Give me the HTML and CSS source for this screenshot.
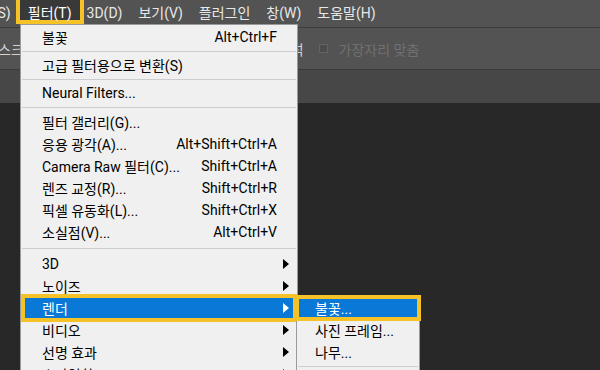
FILE: index.html
```html
<!DOCTYPE html>
<html lang="ko">
<head>
<meta charset="utf-8">
<title>필터 메뉴</title>
<link rel="stylesheet" href="styles.css">
</head>
<body>
<div class="app">
  <header class="menubar">
    <span class="mi first">선택(S)</span>
    <span class="mi active">필터(T)</span>
    <span class="mi after">3D(D)</span>
    <span class="mi">보기(V)</span>
    <span class="mi">플러그인</span>
    <span class="mi">창(W)</span>
    <span class="mi">도움말(H)</span>
  </header>
  <div class="options">
    <span class="opt-text field">스크</span>
    <span class="opt-text magnet">자석</span>
    <span class="checkbox"></span>
    <span class="opt-label">가장자리 맞춤</span>
  </div>
  <div class="tabbar"></div>
  <div class="workspace"></div>

  <div class="menu main-menu">
    <div class="item"><span class="label">불꽃</span><span class="key">Alt+Ctrl+F</span></div>
    <div class="sep"></div>
    <div class="item"><span class="label">고급 필터용으로 변환(S)</span></div>
    <div class="sep"></div>
    <div class="item"><span class="label">Neural Filters...</span></div>
    <div class="sep group"></div>
    <div class="item"><span class="label">필터 갤러리(G)...</span></div>
    <div class="item"><span class="label">응용 광각(A)...</span><span class="key">Alt+Shift+Ctrl+A</span></div>
    <div class="item"><span class="label">Camera Raw 필터(C)...</span><span class="key">Shift+Ctrl+A</span></div>
    <div class="item"><span class="label">렌즈 교정(R)...</span><span class="key">Shift+Ctrl+R</span></div>
    <div class="item"><span class="label">픽셀 유동화(L)...</span><span class="key">Shift+Ctrl+X</span></div>
    <div class="item"><span class="label">소실점(V)...</span><span class="key">Alt+Ctrl+V</span></div>
    <div class="sep wide"></div>
    <div class="item"><span class="label">3D</span><span class="arrow"></span></div>
    <div class="item"><span class="label">노이즈</span><span class="arrow"></span></div>
    <div class="item hl hl-main"><span class="label">렌더</span><span class="arrow"></span></div>
    <div class="item"><span class="label">비디오</span><span class="arrow"></span></div>
    <div class="item"><span class="label">선명 효과</span><span class="arrow"></span></div>
    <div class="item"><span class="label">스타일화</span><span class="arrow"></span></div>
  </div>

  <div class="menu submenu">
    <div class="item hl hl-sub"><span class="label">불꽃...</span></div>
    <div class="item"><span class="label">사진 프레임...</span></div>
    <div class="item"><span class="label">나무...</span></div>
    <div class="sep"></div>
    <div class="item"><span class="label">구름 효과 1</span></div>
  </div>
</div>
</body>
</html>
```

FILE: styles.css
```css
* {
  box-sizing: border-box;
  margin: 0;
  padding: 0;
}

html,
body {
  width: 600px;
  height: 370px;
  overflow: hidden;
}

body {
  background: #282828;
  font-family: Roboto, "Noto Sans CJK KR", sans-serif;
  font-size: 14px;
}

.app {
  position: relative;
  width: 600px;
  height: 370px;
  display: flex;
  flex-direction: column;
  overflow: hidden;
}

/* top menu bar */
.menubar {
  flex: none;
  height: 28px;
  background: #535353;
  border-bottom: 1px solid #3c3c3c;
  display: flex;
  align-items: flex-start;
  color: #e8e8e8;
  white-space: nowrap;
}

.mi {
  line-height: 27px;
  padding: 0 8px;
}

.mi.first {
  margin-left: -33px;
  padding: 0 5px 0 0;
}

.mi.active {
  height: 24px;
  padding: 0 8px;
  border: 4px solid #f5c228;
  border-top: 0;
  background: #393939;
  color: #fff;
}

.mi.after {
  padding-left: 3px;
}

/* options bar */
.options {
  flex: none;
  height: 42px;
  background: #535353;
  border-bottom: 1px solid #3a3a3a;
  display: flex;
  align-items: center;
  white-space: nowrap;
}

.opt-text {
  color: #d2d2d2;
}

.field {
  margin-left: -2px;
}

.magnet {
  margin-left: 254px;
}

.checkbox {
  margin-left: 15px;
  width: 9px;
  height: 9px;
  border: 1px solid #636363;
  background: #4c4c4c;
}

.opt-label {
  margin-left: 11px;
  color: #707070;
}

.tabbar {
  flex: none;
  height: 33px;
  background: #474747;
}

.workspace {
  flex: 1;
  background: #282828;
}

/* dropdown menus */
.menu {
  position: absolute;
  background: #f0f0f0;
  border: 1px solid #9a9a9a;
  color: #000;
}

.main-menu {
  left: 20px;
  top: 24px;
  width: 278px;
  padding-top: 1px;
}

.submenu {
  left: 296px;
  top: 296px;
  width: 124px;
}

.item {
  display: flex;
  align-items: center;
  height: 22px;
  padding: 0 20px 0 21px;
  white-space: nowrap;
}

.submenu .item {
  padding-left: 18px;
}

.key {
  margin-left: auto;
}

.arrow {
  margin-left: auto;
  margin-right: -12px;
  width: 0;
  height: 0;
  border-left: 6px solid #000;
  border-top: 5px solid transparent;
  border-bottom: 5px solid transparent;
}

.sep {
  height: 1px;
  background: #cdcdcd;
  margin: 3px 1px 2px;
}

.sep.group {
  margin: 3px 1px 3px;
}

.sep.wide {
  margin: 5px 1px 4px;
}

.hl {
  background: #0a78d7;
  color: #fff;
  outline: 4px solid #f5c228;
}

.hl .arrow {
  border-left-color: #fff;
}

.hl-main {
  margin: 1px 4px;
  height: 20px;
  padding-left: 17px;
  padding-right: 16px;
}

.submenu .hl-sub {
  margin: 2px 2px;
  height: 18px;
  padding-left: 16px;
}
```
